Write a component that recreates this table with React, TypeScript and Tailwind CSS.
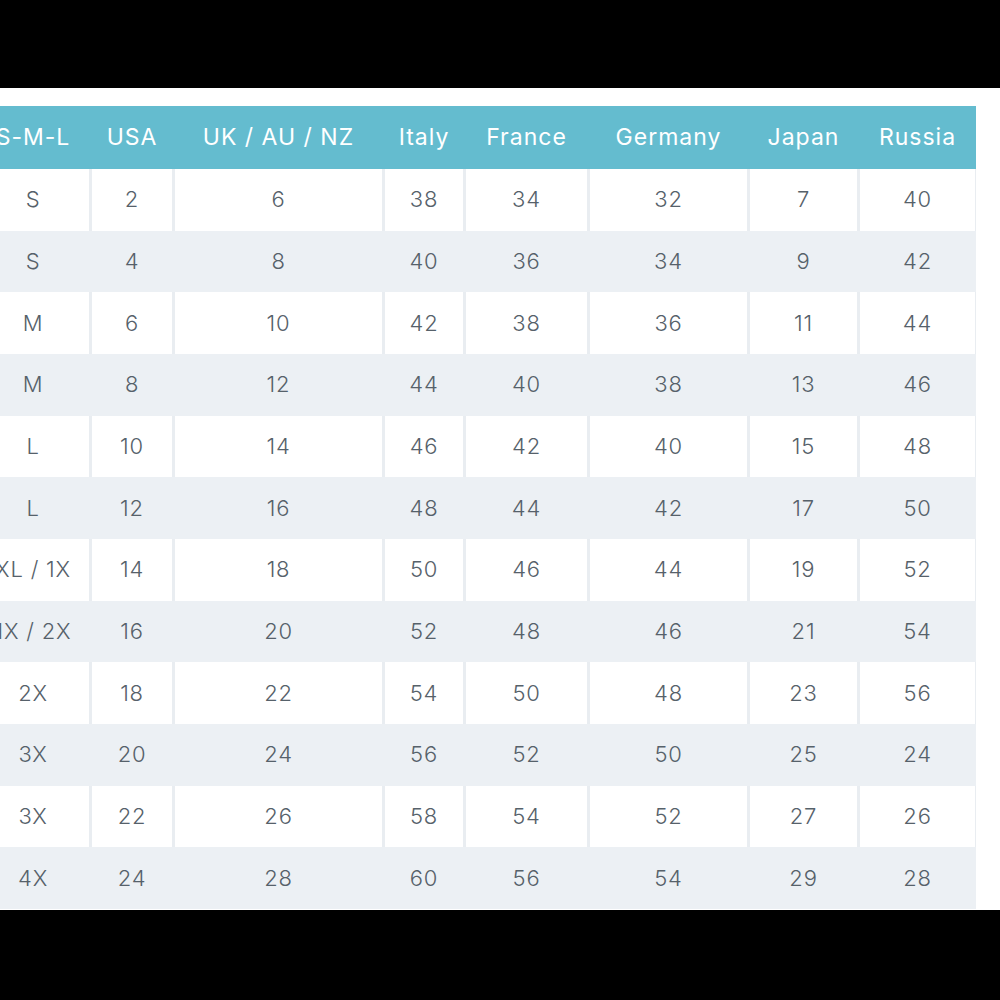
const headers = ["S-M-L", "USA", "UK / AU / NZ", "Italy", "France", "Germany", "Japan", "Russia"];

const rows = [
  ["S", "2", "6", "38", "34", "32", "7", "40"],
  ["S", "4", "8", "40", "36", "34", "9", "42"],
  ["M", "6", "10", "42", "38", "36", "11", "44"],
  ["M", "8", "12", "44", "40", "38", "13", "46"],
  ["L", "10", "14", "46", "42", "40", "15", "48"],
  ["L", "12", "16", "48", "44", "42", "17", "50"],
  ["XL / 1X", "14", "18", "50", "46", "44", "19", "52"],
  ["1X / 2X", "16", "20", "52", "48", "46", "21", "54"],
  ["2X", "18", "22", "54", "50", "48", "23", "56"],
  ["3X", "20", "24", "56", "52", "50", "25", "24"],
  ["3X", "22", "26", "58", "54", "52", "27", "26"],
  ["4X", "24", "28", "60", "56", "54", "29", "28"],
];

const cols = "grid grid-cols-[112px_80px_207px_78px_121px_157px_107px_115px] gap-x-[3px]";

export default function App() {
  return (
    <div className="w-[1000px] h-[1000px] bg-black flex flex-col overflow-hidden font-['Inter','Liberation_Sans',sans-serif]">
      <div className="h-[88px] shrink-0" />
      <div className="h-[822px] shrink-0 bg-white pt-[18px] overflow-hidden">
        <div className="ml-[-23px] w-[999px] flex flex-col">
          {/* Header */}
          <div className={`${cols} h-[63px] bg-[#64bccf]`}>
            {headers.map((h) => (
              <div key={h} className="flex items-center justify-center text-white text-[23px] tracking-[1px] whitespace-nowrap">
                {h}
              </div>
            ))}
          </div>
          {/* Body */}
          <div className="h-[740px] flex flex-col">
            {rows.map((r, i) => (
              <div
                key={i}
                className={`${cols} flex-1 ${i % 2 === 0 ? "bg-[#e9edf1]" : "bg-[#ecf0f4]"}`}
              >
                {r.map((c, j) => (
                  <div
                    key={j}
                    className={`flex items-center justify-center text-[22px] font-light tracking-[0.8px] text-[#56616a] whitespace-nowrap ${
                      i % 2 === 0 ? "bg-white" : "bg-[#ecf0f4]"
                    }`}
                  >
                    {c}
                  </div>
                ))}
              </div>
            ))}
          </div>
        </div>
      </div>
      <div className="flex-1" />
    </div>
  );
}
